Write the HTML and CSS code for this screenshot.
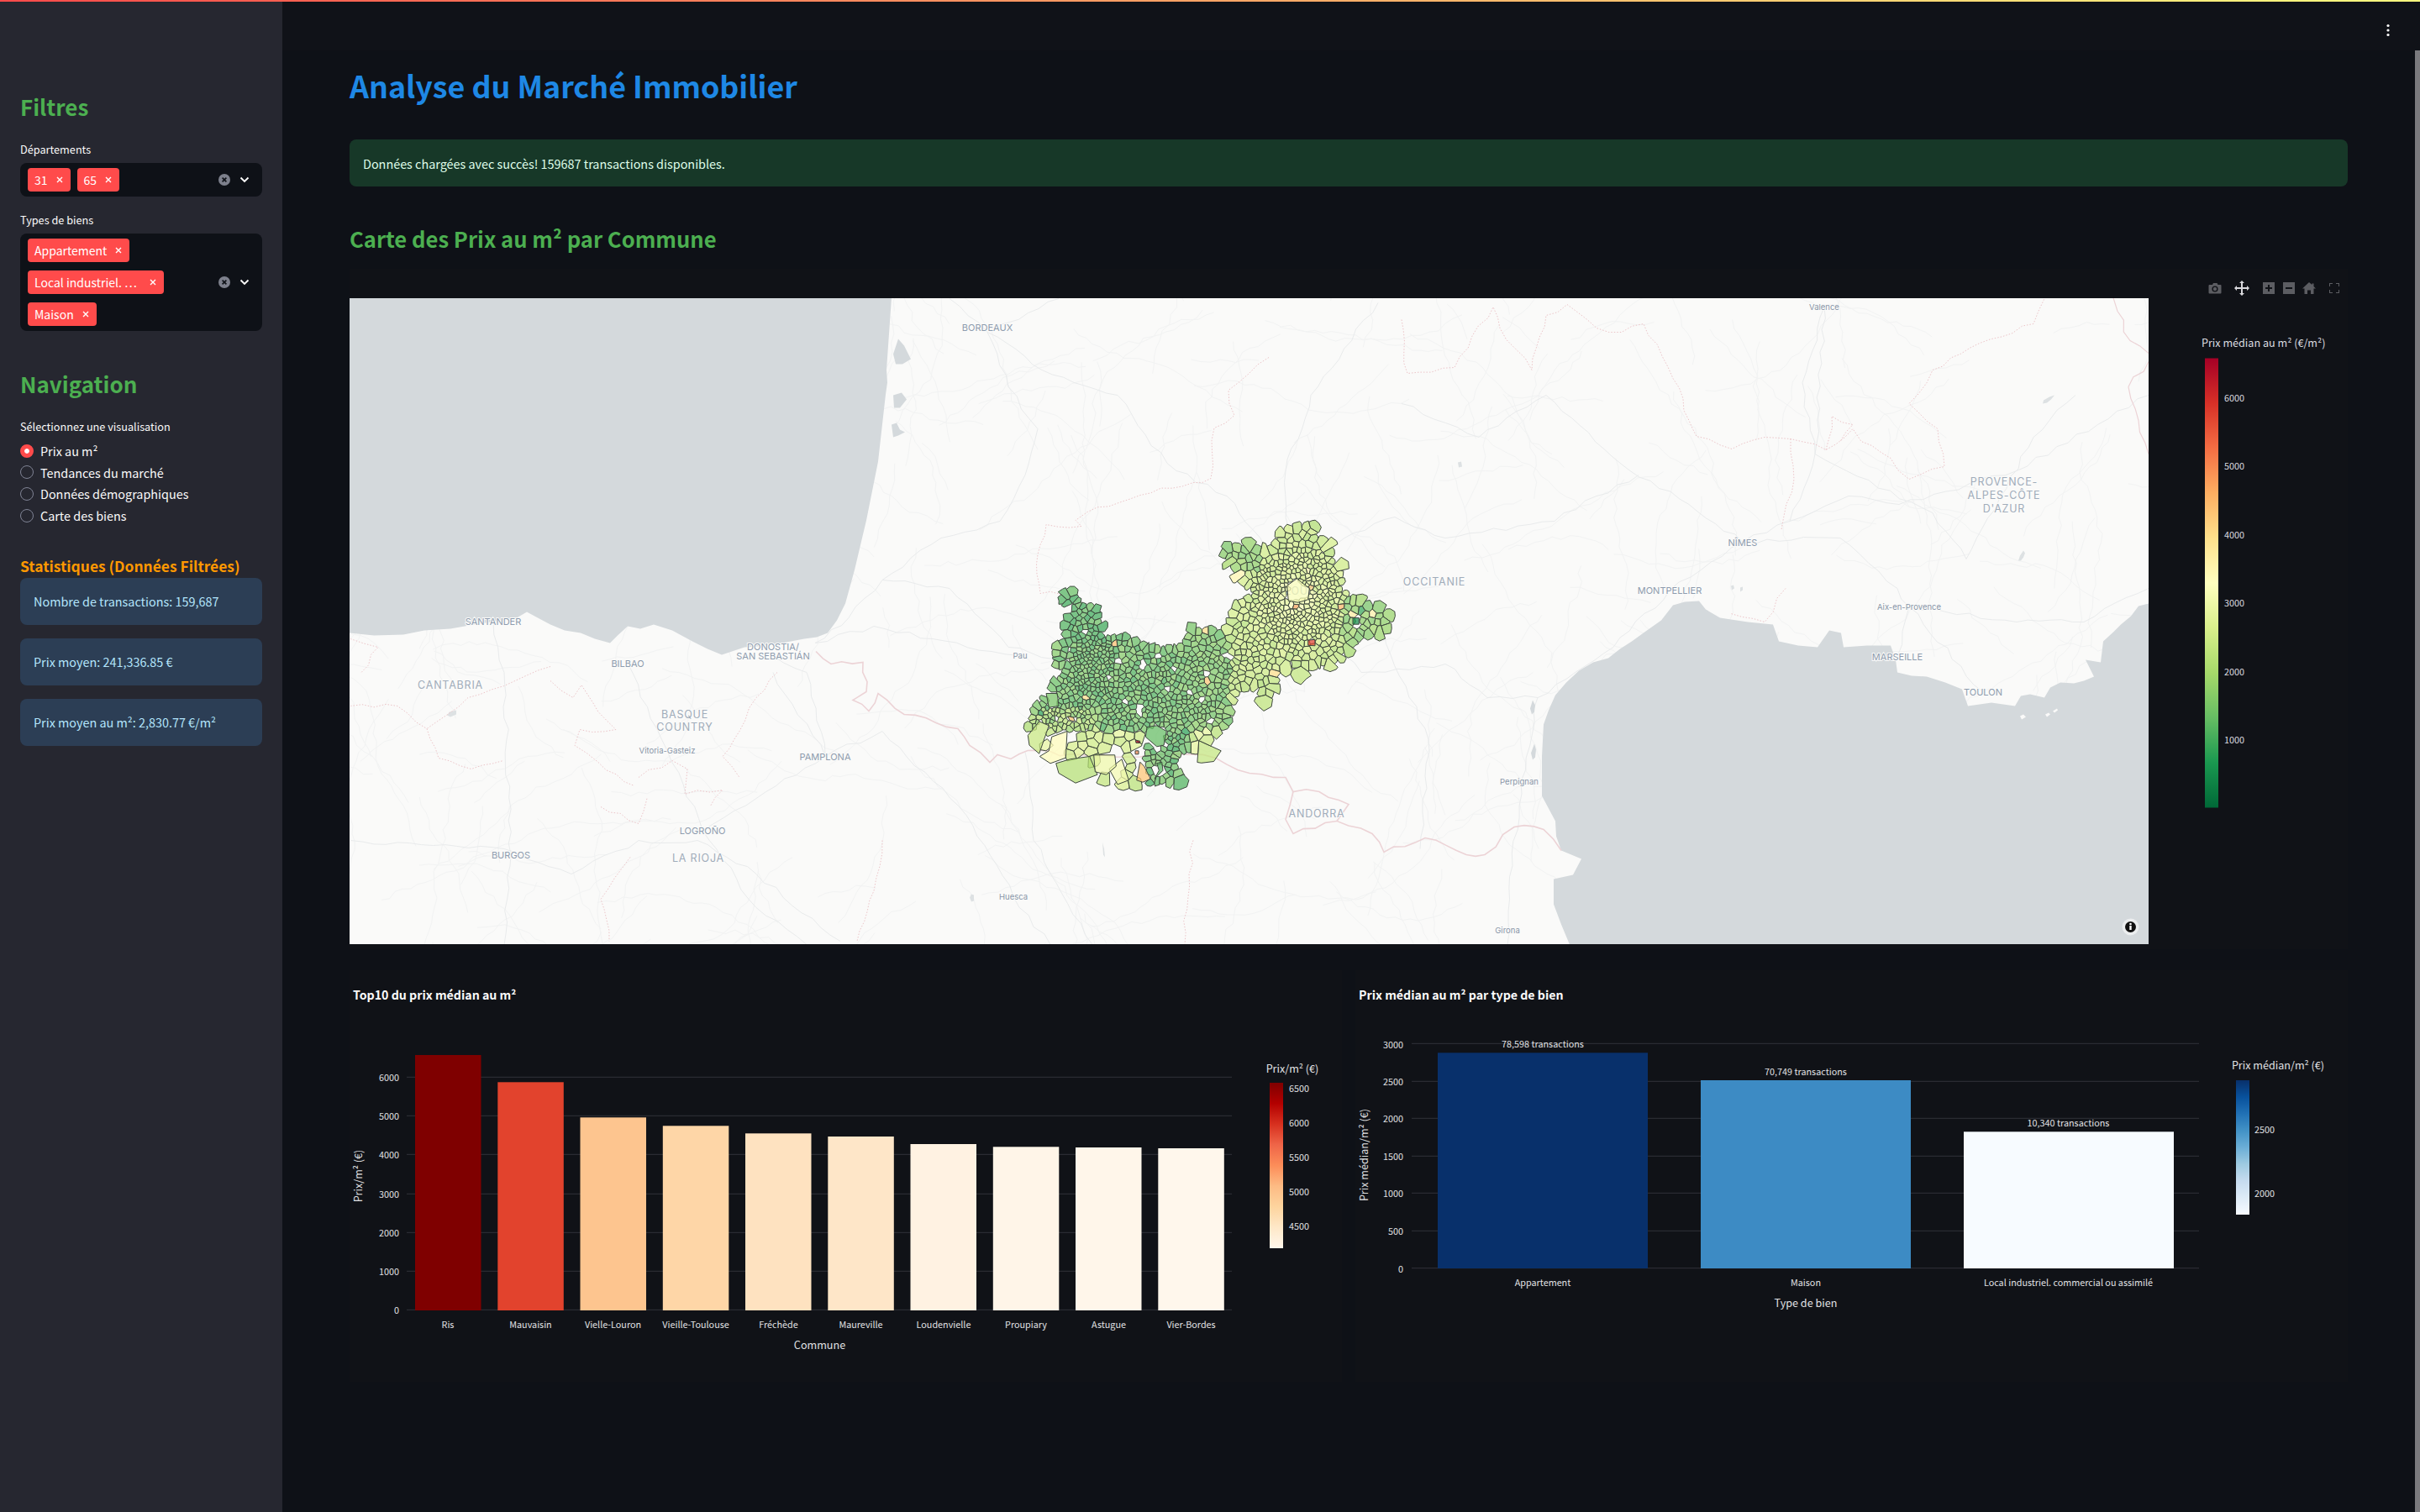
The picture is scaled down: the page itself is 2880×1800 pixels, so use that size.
FILE: index.html
```html
<!DOCTYPE html>
<html lang="fr">
<head>
<meta charset="utf-8">
<title>Analyse du Marché Immobilier</title>
<link rel="stylesheet" href="styles.css">
</head>
<body>
<div class="decor"></div>
<div class="app">
  <aside class="side">
    <h2 class="side-h first">Filtres</h2>
    <div class="lab lab-a">Départements</div>
    <div class="sel">
      <div class="tags">
        <span class="tag">31<svg class="x" viewBox="0 0 10 10"><path d="M2 2l6 6M8 2l-6 6"/></svg></span>
        <span class="tag">65<svg class="x" viewBox="0 0 10 10"><path d="M2 2l6 6M8 2l-6 6"/></svg></span>
      </div>
      <div class="ctl">
        <svg class="clr" viewBox="0 0 14 14"><circle cx="7" cy="7" r="7"/><path d="M4.6 4.6l4.8 4.8M9.4 4.6l-4.8 4.8"/></svg>
        <svg class="chev" viewBox="0 0 14 14"><path d="M2.5 4.5L7 9l4.5-4.5"/></svg>
      </div>
    </div>
    <div class="lab lab-b">Types de biens</div>
    <div class="sel">
      <div class="tags col">
        <span class="tag">Appartement<svg class="x" viewBox="0 0 10 10"><path d="M2 2l6 6M8 2l-6 6"/></svg></span>
        <span class="tag tag-long">Local industriel. …<svg class="x" viewBox="0 0 10 10"><path d="M2 2l6 6M8 2l-6 6"/></svg></span>
        <span class="tag">Maison<svg class="x" viewBox="0 0 10 10"><path d="M2 2l6 6M8 2l-6 6"/></svg></span>
      </div>
      <div class="ctl">
        <svg class="clr" viewBox="0 0 14 14"><circle cx="7" cy="7" r="7"/><path d="M4.6 4.6l4.8 4.8M9.4 4.6l-4.8 4.8"/></svg>
        <svg class="chev" viewBox="0 0 14 14"><path d="M2.5 4.5L7 9l4.5-4.5"/></svg>
      </div>
    </div>
    <h2 class="side-h nav">Navigation</h2>
    <div class="lab lab-a">Sélectionnez une visualisation</div>
    <div class="radios">
      <div class="radio on"><span class="dot"></span>Prix au m²</div>
      <div class="radio"><span class="dot"></span>Tendances du marché</div>
      <div class="radio"><span class="dot"></span>Données démographiques</div>
      <div class="radio"><span class="dot"></span>Carte des biens</div>
    </div>
    <h3 class="stat-h">Statistiques (Données Filtrées)</h3>
    <div class="cards">
      <div class="card">Nombre de transactions: 159,687</div>
      <div class="card">Prix moyen: 241,336.85 €</div>
      <div class="card">Prix moyen au m²: 2,830.77 €/m²</div>
    </div>
  </aside>

  <div class="right">
    <header class="head">
      <svg class="kebab" viewBox="0 0 6 16"><circle cx="3" cy="2.5" r="1.6"/><circle cx="3" cy="8" r="1.6"/><circle cx="3" cy="13.5" r="1.6"/></svg>
    </header>
    <div class="body">
      <main class="main">
        <h1 class="title">Analyse du Marché Immobilier</h1>
        <div class="alert">Données chargées avec succès! 159687 transactions disponibles.</div>
        <h2 class="sub">Carte des Prix au m² par Commune</h2>

        <section class="panel">
          <div class="tools">
            <svg class="ti cam" viewBox="0 0 16 14"><path d="M1.5 3H5l1-2h4.500l1 2h3a1 1 0 0 1 1 1v8.500a1 1 0 0 1-1 1h-13a1 1 0 0 1-1-1V4a1 1 0 0 1 1-1z"/><circle class="hole" cx="8" cy="8" r="3.600"/><circle cx="8" cy="8" r="2.200"/></svg>
            <svg class="ti pan" viewBox="0 0 18 18"><path d="M9 0l3 3h-2v5h5V6l3 3-3 3v-2h-5v5h2l-3 3-3-3h2v-5H3v2L0 9l3-3v2h5V3H6z"/></svg>
            <svg class="ti box" viewBox="0 0 14 14"><rect width="14" height="14"/><path class="sign" d="M6 3h2v3h3v2H8v3H6V8H3V6h3z"/></svg>
            <svg class="ti box" viewBox="0 0 14 14"><rect width="14" height="14"/><path class="sign" d="M3 6h8v2H3z"/></svg>
            <svg class="ti home" viewBox="0 0 16 14"><path d="M8 0l3.500 3V1.500h2V5L16 7.500h-2.500V14H10V9.500H6V14H2.500V7.500H0z"/></svg>
            <svg class="ti full" viewBox="0 0 12 12"><path d="M0 4V0h4M8 0h4v4M12 8v4H8M4 12H0V8"/></svg>
          </div>
          <div class="map-row">
            <svg class="map" viewBox="416 354.500 2141 769.500" aria-label="Carte">
              <rect class="land" x="416" y="354.500" width="2141" height="769.500"/>
              <g id="mesh" class="mesh"></g>
              <g class="road wig">
                <polyline points="1175,395 1200,460 1235,510 1220,565 1190,620 1120,640 1050,690 1010,735 970,765"/>
                <polyline points="1175,395 1240,440 1330,470 1370,530 1400,560 1460,590 1500,640 1537,700"/>
                <polyline points="1050,690 1130,700 1200,770 1280,790 1350,800 1420,790 1480,760 1537,700"/>
                <polyline points="1537,700 1600,640 1660,615 1720,640 1850,620 1900,590 1950,565"/>
                <polyline points="1537,700 1620,800 1720,790 1770,830 1830,830 1920,770 1987,702 2074,645 2130,620 2160,540 2171,365"/>
                <polyline points="2074,645 2190,640 2258,700 2272,722 2258,781"/>
                <polyline points="2272,722 2360,823"/>
                <polyline points="2272,722 2400,740 2480,740 2557,700"/>
                <polyline points="2160,540 2300,610 2340,665 2420,520 2470,470"/>
                <polyline points="1830,830 1810,930 1800,1030 1794,1124"/>
                <polyline points="417,1000 600,1010 680,1040 760,1000 830,1000 900,1040 1000,1120"/>
                <polyline points="608,1017 600,1124"/>
                <polyline points="836,988 900,950 982,900 920,800"/>
                <polyline points="982,900 1050,870 1150,970 1206,1067 1250,1124"/>
                <polyline points="747,789 794,893 836,988 900,1080 960,1124"/>
                <polyline points="587,739 600,800 608,1017"/>
                <polyline points="920,780 960,800 982,900"/>
                <polyline points="970,765 1040,745 1110,760 1180,775 1214,780"/>
                <polyline points="1175,395 1130,355"/>
                <polyline points="1175,395 1260,355"/>
                <polyline points="1668,480 1760,520 1840,470 1940,560 2010,600 2074,645"/>
                <polyline points="2130,620 2200,590 2260,600 2400,560 2557,470"/>
                <polyline points="1537,700 1530,560 1560,470 1640,360"/>
                <polyline points="1640,740 1700,880 1690,1010"/>
                <polyline points="1220,895 1230,1000 1300,1124"/>
                <polyline points="2171,365 2145,455 2160,540"/>
              </g>
              <path class="sea" d="M1061 354L1055 440 1056 455 1054 469 1045 549 1031 619 1026 640 1017 678 1006 718 996 738 985 753 972 758 957 760 915 768 886 770 859 779 842 772 824 763 800 750 778 743 762 748 747 745 735 756 726 765 708 760 691 753 672 750 655 743 640 735 627 728 615 735 599 738 570 742 536 748 505 750 480 755 445 756 416 753 416 354z"/>
              <path class="sea" d="M2557 718L2545 721 2536 733 2524 743 2515 752 2503 763 2500 788 2482 785 2492 805 2480 810 2468 813 2452 812 2440 818 2433 830 2416 826 2405 828 2398 840 2370 836 2342 840 2335 820 2315 812 2293 805 2275 804 2258 800 2256 785 2250 768 2222 768 2194 770 2191 753 2177 750 2163 770 2140 768 2117 763 2110 743 2080 740 2047 735 2030 725 2022 715 2005 716 1991 720 1977 738 1960 750 1942 763 1928 772 1914 783 1896 788 1879 798 1864 812 1851 827 1843 845 1837 862 1835 900 1835 947 1843 962 1851 977 1852 995 1858 1012 1882 1022 1872 1041 1849 1046 1849 1076 1858 1100 1868 1124 2557 1124z"/>
              <g class="sea">
                <path d="M1069 403l7 8 8 16-10 6-8 0-3-12z"/>
                <path d="M1063 470l10-3 6 8-8 10-7 0z"/>
                <path d="M1061 505l6-2 4 8 6 3-8 4-6 2z"/>
                <path d="M1824 833l3 6-1 8-3 3-2-7z"/>
                <path d="M1826 885l2 7-1 9-3 3-2-8z"/>
              </g>
              <g class="lake">
                <path d="M2408 655l2 3-2 5-3 4-3 0 2-6z"/>
                <path d="M2432 476l7-4 6-2-4 5-5 4-5 1z"/>
                <path d="M2060 697l3-1 1 4-3 2zM2071 699l3-1 0 4-3 2z"/>
                <path d="M535 847l8-2 0 5-7 3-4-2z"/>
                <path d="M1156 1064l3 1 0 7-3 1-2-5z"/>
                <path d="M1312 1002l2 8 1 10-2-3z"/>
                <path d="M1735 550l4-1 1 6-4 1z"/>
              </g>
              <path class="land-bit" d="M2404 852l4-2 3 3-5 3zM2434 850l4-2 2 2-4 3zM2443 846l5-3 1 2-4 3z"/>
              <g class="dash wig">
                <polyline points="1510,425 1462,464 1469,494 1445,509 1441,569 1420,574 1357,589 1294,609 1280,619 1287,626 1245,624 1238,648 1234,683 1238,706 1262,707"/>
                <polyline points="1668,380 1675,444 1731,437 1777,365 1785,390 1823,440 1840,375 1865,362 1900,390 1930,395 1956,385 1991,450 2010,500 2019,519 2061,534 2100,520 2131,522 2173,535 2205,510 2215,525 2250,545 2272,570 2314,555 2306,510 2272,480 2300,440 2356,408 2420,385 2433,355"/>
                <polyline points="2173,535 2180,495 2205,505 2190,525"/>
                <polyline points="2125,700 2100,740 2060,730"/>
                <polyline points="2131,522 2135,570 2120,630"/>
                <polyline points="417,840 473,840 508,867 522,902 561,915 599,905"/>
                <polyline points="655,793 613,810 557,830 508,867"/>
                <polyline points="655,810 682,830 692,815 712,847 733,868 690,868 684,887 712,907 755,935"/>
                <polyline points="760,925 800,905 818,915 815,945 860,940 845,960"/>
                <polyline points="750,1020 715,1070 725,1120"/>
                <polyline points="715,960 760,980 770,950"/>
                <polyline points="925,800 900,830 880,870 860,900 880,925"/>
                <polyline points="1050,1000 1040,1060 1020,1120"/>
                <polyline points="1420,1000 1415,1040 1410,1124"/>
                <polyline points="417,760 450,770 430,800"/>
              </g>
              <g class="border wig">
                <polyline points="971,775 989,790 1027,788 1031,823 1015,833 1034,846 1045,825 1076,850 1140,867 1154,887 1178,907 1187,898 1203,903 1223,893 1300,900 1400,897 1447,902 1487,920 1530,925 1539,942 1570,942 1605,957 1591,977 1633,992 1647,1014 1696,997 1745,1017 1767,1017 1802,984 1837,987 1858,1012"/>
                <polyline points="1539,942 1530,975 1539,992 1577,979 1591,977"/>
                <polyline class="thin" points="2557,420 2535,405 2520,370 2515,354"/>
                <polyline class="thin" points="2557,430 2533,460 2545,500 2557,540"/>
              </g>
              <g class="lbl">
                <text class="big" x="1537" y="703">TOULOUSE</text>
                <text x="1175" y="389">BORDEAUX</text>
                <text x="587" y="739">SANTANDER</text>
                <text x="920" y="769">DONOSTIA/</text>
                <text x="920" y="780">SAN SEBASTIÁN</text>
                <text x="747" y="789">BILBAO</text>
                <text class="big" x="536" y="815">CANTABRIA</text>
                <text class="big" x="815" y="850">BASQUE</text>
                <text class="big" x="815" y="865">COUNTRY</text>
                <text class="small" x="794" y="893">Vitoria-Gasteiz</text>
                <text x="982" y="900">PAMPLONA</text>
                <text x="836" y="988">LOGROÑO</text>
                <text class="big" x="831" y="1021">LA RIOJA</text>
                <text x="608" y="1017">BURGOS</text>
                <text class="small" x="1206" y="1067">Huesca</text>
                <text class="small" x="1214" y="780">Pau</text>
                <text class="small" x="2171" y="365">Valence</text>
                <text class="big" x="2385" y="573">PROVENCE-</text>
                <text class="big" x="2385" y="589">ALPES-CÔTE</text>
                <text class="big" x="2385" y="605">D'AZUR</text>
                <text x="2074" y="645">NÎMES</text>
                <text class="big" x="1707" y="692">OCCITANIE</text>
                <text x="1987" y="702">MONTPELLIER</text>
                <text class="small" x="2272" y="722">Aix-en-Provence</text>
                <text x="2258" y="781">MARSEILLE</text>
                <text x="2360" y="823">TOULON</text>
                <text class="small" x="1808" y="930">Perpignan</text>
                <text class="big" x="1567" y="968">ANDORRA</text>
                <text class="small" x="1794" y="1107">Girona</text>
              </g>
              <g id="communes" class="communes"></g>
              <g class="info">
                <circle class="halo" cx="2535.500" cy="1103" r="10"/>
                <circle class="disc" cx="2535.500" cy="1103" r="6.500"/>
                <circle class="i" cx="2535.500" cy="1099.500" r="1.300"/>
                <rect class="i" x="2534.300" y="1101.500" width="2.400" height="5"/>
              </g>
            </svg>
            <svg class="legend" viewBox="2557 354.500 237 769.500">
              <defs>
                <linearGradient id="rdylgn" x1="0" y1="1" x2="0" y2="0">
                  <stop offset="0" stop-color="#006837"/><stop offset=".1" stop-color="#1a9850"/>
                  <stop offset=".2" stop-color="#66bd63"/><stop offset=".3" stop-color="#a6d96a"/>
                  <stop offset=".4" stop-color="#d9ef8b"/><stop offset=".5" stop-color="#ffffbf"/>
                  <stop offset=".6" stop-color="#fee08b"/><stop offset=".7" stop-color="#fdae61"/>
                  <stop offset=".8" stop-color="#f46d43"/><stop offset=".9" stop-color="#d73027"/>
                  <stop offset="1" stop-color="#a50026"/>
                </linearGradient>
              </defs>
              <text class="t13" x="2620" y="407">Prix médian au m² (€/m²)</text>
              <rect x="2624" y="426" width="16" height="535" fill="url(#rdylgn)"/>
              <text class="t12" x="2647" y="472">6000</text>
              <text class="t12" x="2647" y="553">5000</text>
              <text class="t12" x="2647" y="635">4000</text>
              <text class="t12" x="2647" y="716">3000</text>
              <text class="t12" x="2647" y="798">2000</text>
              <text class="t12" x="2647" y="879">1000</text>
            </svg>
          </div>
        </section>

        <div class="charts">
          <svg class="chart" viewBox="416 1155 1181 490">
            <defs>
              <linearGradient id="orrd" x1="0" y1="1" x2="0" y2="0">
                <stop offset="0" stop-color="#fff7ec"/><stop offset=".125" stop-color="#fee8c8"/>
                <stop offset=".25" stop-color="#fdd49e"/><stop offset=".375" stop-color="#fdbb84"/>
                <stop offset=".5" stop-color="#fc8d59"/><stop offset=".625" stop-color="#ef6548"/>
                <stop offset=".75" stop-color="#d7301f"/><stop offset=".875" stop-color="#b30000"/>
                <stop offset="1" stop-color="#7f0000"/>
              </linearGradient>
            </defs>
            <text class="ct" x="420" y="1184">Top10 du prix médian au m²</text>
            <g class="grid">
              <line x1="484" x2="1466" y1="1282.300" y2="1282.300"/><line x1="484" x2="1466" y1="1328.300" y2="1328.300"/>
              <line x1="484" x2="1466" y1="1374.300" y2="1374.300"/><line x1="484" x2="1466" y1="1421.300" y2="1421.300"/>
              <line x1="484" x2="1466" y1="1467.300" y2="1467.300"/><line x1="484" x2="1466" y1="1513.300" y2="1513.300"/>
              <line x1="484" x2="1466" y1="1559.300" y2="1559.300"/>
            </g>
            <rect x="494" y="1256" width="78.500" height="304" fill="#7f0000"/>
            <rect x="592.300" y="1288.300" width="78.500" height="271.700" fill="#e2432d"/>
            <rect x="690.500" y="1330.300" width="78.500" height="229.700" fill="#fdc58f"/>
            <rect x="788.800" y="1340.300" width="78.500" height="219.700" fill="#fed6a7"/>
            <rect x="887" y="1349.300" width="78.500" height="210.700" fill="#fee2c0"/>
            <rect x="985.300" y="1353" width="78.500" height="207" fill="#fee6c8"/>
            <rect x="1083.500" y="1362" width="78.500" height="198" fill="#fff2e2"/>
            <rect x="1181.800" y="1365.300" width="78.500" height="194.700" fill="#fff5e8"/>
            <rect x="1280" y="1366" width="78.500" height="194" fill="#fff6ea"/>
            <rect x="1378.300" y="1367" width="78.500" height="193" fill="#fff7ec"/>
            <g class="ty">
              <text x="475" y="1282">6000</text><text x="475" y="1328">5000</text><text x="475" y="1374">4000</text>
              <text x="475" y="1421">3000</text><text x="475" y="1467">2000</text><text x="475" y="1513">1000</text><text x="475" y="1559">0</text>
            </g>
            <g class="tx">
              <text x="533" y="1576">Ris</text><text x="631.500" y="1576">Mauvaisin</text><text x="729.500" y="1576">Vielle-Louron</text>
              <text x="828" y="1576">Vieille-Toulouse</text><text x="926.500" y="1576">Fréchède</text><text x="1024.500" y="1576">Maureville</text>
              <text x="1123" y="1576">Loudenvielle</text><text x="1221" y="1576">Proupiary</text><text x="1319.500" y="1576">Astugue</text><text x="1417.500" y="1576">Vier-Bordes</text>
            </g>
            <text class="at" x="975.500" y="1600">Commune</text>
            <text class="at" x="425" y="1400" transform="rotate(-90 425 1400)">Prix/m² (€)</text>
            <text class="at" x="1538" y="1271">Prix/m² (€)</text>
            <rect x="1511" y="1289" width="16" height="197" fill="url(#orrd)"/>
            <g class="tl">
              <text x="1534" y="1295">6500</text><text x="1534" y="1336">6000</text><text x="1534" y="1377">5500</text>
              <text x="1534" y="1418">5000</text><text x="1534" y="1459">4500</text>
            </g>
          </svg>

          <svg class="chart" viewBox="1613 1155 1181 490">
            <defs>
              <linearGradient id="blues" x1="0" y1="1" x2="0" y2="0">
                <stop offset="0" stop-color="#f7fbff"/><stop offset=".125" stop-color="#deebf7"/>
                <stop offset=".25" stop-color="#c6dbef"/><stop offset=".375" stop-color="#9ecae1"/>
                <stop offset=".5" stop-color="#6baed6"/><stop offset=".625" stop-color="#4292c6"/>
                <stop offset=".75" stop-color="#2171b5"/><stop offset=".875" stop-color="#08519c"/>
                <stop offset="1" stop-color="#08306b"/>
              </linearGradient>
            </defs>
            <text class="ct" x="1617" y="1184">Prix médian au m² par type de bien</text>
            <g class="grid">
              <line x1="1680" x2="2617" y1="1242.300" y2="1242.300"/><line x1="1680" x2="2617" y1="1287.300" y2="1287.300"/>
              <line x1="1680" x2="2617" y1="1331.300" y2="1331.300"/><line x1="1680" x2="2617" y1="1376.300" y2="1376.300"/>
              <line x1="1680" x2="2617" y1="1420.300" y2="1420.300"/><line x1="1680" x2="2617" y1="1465.300" y2="1465.300"/>
              <line x1="1680" x2="2617" y1="1509.700" y2="1509.700"/>
            </g>
            <rect x="1711" y="1253.300" width="250" height="256.700" fill="#08306b"/>
            <rect x="2024" y="1286" width="250" height="224" fill="#3d8bc4"/>
            <rect x="2337" y="1347.300" width="250" height="162.700" fill="#f7fbff"/>
            <g class="tx">
              <text x="1836" y="1242">78,598 transactions</text><text x="2149" y="1275">70,749 transactions</text><text x="2461.500" y="1336">10,340 transactions</text>
              <text x="1836" y="1526">Appartement</text><text x="2149" y="1526">Maison</text><text x="2461.500" y="1526">Local industriel. commercial ou assimilé</text>
            </g>
            <g class="ty">
              <text x="1670" y="1243">3000</text><text x="1670" y="1287">2500</text><text x="1670" y="1331">2000</text>
              <text x="1670" y="1376">1500</text><text x="1670" y="1420">1000</text><text x="1670" y="1465">500</text><text x="1670" y="1510">0</text>
            </g>
            <text class="at" x="2149" y="1550">Type de bien</text>
            <text class="at" x="1622" y="1375" transform="rotate(-90 1622 1375)">Prix médian/m² (€)</text>
            <text class="at" x="2711" y="1267">Prix médian/m² (€)</text>
            <rect x="2661" y="1286" width="16" height="160" fill="url(#blues)"/>
            <g class="tl">
              <text x="2683" y="1344">2500</text><text x="2683" y="1420">2000</text>
            </g>
          </svg>
        </div>
      </main>
      <div class="scroll"></div>
    </div>
  </div>
</div>
<script src="script.js"></script>
</body>
</html>
```
FILE: styles.css
```css
* { box-sizing: border-box; }
html, body { margin: 0; padding: 0; height: 100%; overflow: hidden; background: #0e1117; }
body { font-family: "Noto Sans CJK SC", "Noto Sans", sans-serif; color: #fafafa; font-size: 14.400px; }
svg text { font-family: "Noto Sans CJK SC", "Noto Sans", sans-serif; }

.decor { height: 2px; background: linear-gradient(90deg, #ff4b4b, #fffd80); }
.app { display: flex; height: 1798px; }

/* Sidebar */
.side { width: 336px; flex: none; background: #262730; padding: 0 24px; }
.side-h { margin: 0; font-weight: 700; font-size: 26px; line-height: 40px; color: #4caf50; }
.side-h.first { margin-top: 105px; }
.side-h.nav { margin-top: 43px; }
.lab { font-size: 12.700px; line-height: 20px; margin-bottom: 6px; color: #fafafa; }
.lab-a { margin-top: 21px; }
.lab-b { margin-top: 18px; }
.sel { display: flex; align-items: center; background: #0e1117; border-radius: 8px; padding: 6px 14px 6px 9px; }
.tags { flex: 1; display: flex; gap: 8px; }
.tags.col { flex-direction: column; align-items: flex-start; gap: 10px; }
.tag { display: inline-flex; align-items: center; gap: 9px; height: 28px; padding: 0 8px; background: #ff4b4b; color: #fff; border-radius: 4px; font-size: 14px; line-height: 28px; white-space: nowrap; }
.tag-long { gap: 14px; }
.x { width: 10px; height: 10px; }
.x path { stroke: #fff; stroke-width: 1.4; fill: none; }
.ctl { display: flex; align-items: center; gap: 10px; }
.clr { width: 14px; height: 14px; }
.clr circle { fill: #7d808c; }
.clr path { stroke: #0e1117; stroke-width: 1.6; fill: none; }
.chev { width: 14px; height: 14px; }
.chev path { stroke: #fafafa; stroke-width: 1.9; fill: none; }
.radios { margin-top: 1px; }
.radio { display: flex; align-items: center; gap: 8px; height: 25.600px; font-size: 14.400px; }
.dot { width: 16px; height: 16px; border-radius: 50%; border: 1px solid #808495; background: #262730; flex: none; }
.radio.on .dot { background: #ff4b4b; border: 5px solid #ff4b4b; box-shadow: inset 0 0 0 3px #fff; }
.stat-h { margin: 33.400px 0 0; font-weight: 700; font-size: 17.400px; line-height: 28px; color: #ff9800; white-space: nowrap; }
.cards { display: flex; flex-direction: column; gap: 16px; }
.card { height: 56px; display: flex; align-items: center; padding-left: 16px; background: #2c3e55; border-radius: 8px; color: #b3e5fc; font-size: 14.400px; }

/* Right */
.right { flex: 1; min-width: 0; display: flex; flex-direction: column; }
.head { height: 58px; flex: none; background: #101218; display: flex; align-items: center; justify-content: flex-end; padding-right: 35px; }
.kebab { width: 6px; height: 16px; margin-top: 10px; }
.kebab circle { fill: #fafafa; }
.body { flex: 1; display: flex; min-height: 0; }
.main { flex: 1; min-width: 0; padding: 0 80px; }
.scroll { width: 6px; flex: none; background: #7a7a7e; }

.title { margin: 11px 0 0; font-size: 35.800px; line-height: 60px; font-weight: 700; color: #1e88e5; }
.alert { margin-top: 35px; height: 56px; display: flex; align-items: center; padding-left: 16px; background: #173828; border-radius: 8px; color: #dffde9; font-size: 14.400px; }
.sub { margin: 40px 0 0; font-size: 25.600px; line-height: 44px; font-weight: 700; color: #4caf50; }

.panel { margin-top: 14px; height: 810px; background: #101217; }
.tools { height: 34.500px; display: flex; align-items: center; justify-content: flex-end; padding-right: 10px; padding-top: 12px; }
.ti { display: block; fill: #5c5d62; }
.cam { width: 16px; height: 14px; margin-right: 15px; }
.cam .hole { fill: #101217; }
.pan { width: 18px; height: 18px; margin-right: 16px; fill: #d8d8dc; }
.box { width: 14px; height: 14px; margin-right: 10px; }
.box + .box { margin-right: 9px; }
.sign { fill: #101217; }
.home { width: 16px; height: 14px; margin-right: 16px; }
.full { width: 12px; height: 12px; fill: none; stroke: #5c5d62; stroke-width: 2; }
.map-row { display: flex; }
.map { display: block; width: 2141px; height: 769.500px; flex: none; }
.legend { display: block; width: 237px; height: 769.500px; flex: none; }

.land { fill: #fafaf9; }
.land-bit { fill: #fafaf9; }
.sea, .sea path { fill: #d4d9dc; }
.lake path { fill: #dde1e3; }
.mesh polyline { fill: none; stroke: #f2f3f3; stroke-width: 1; }
.road polyline { fill: none; stroke: #e9ebec; stroke-width: 1; }
.dash polyline { fill: none; stroke: #ecc4c8; stroke-width: 1; stroke-dasharray: 1.500 2; }
.border polyline { fill: none; stroke: #ecd3d6; stroke-width: 1.600; }
.border .thin { stroke-width: 1.200; }
.lbl text { font-family: "Inter", "Noto Sans", sans-serif; font-size: 11px; fill: #8e9cae; text-anchor: middle; dominant-baseline: central; stroke: #fafaf9; stroke-width: 2px; paint-order: stroke; }
.lbl .big { font-size: 12.500px; letter-spacing: .8px; fill: #a0acba; }
.lbl .small { font-size: 9.500px; fill: #8996a8; }
.communes path { stroke: #3f483f; stroke-width: 1; stroke-linejoin: round; fill-opacity: .72; }
.halo { fill: rgba(255,255,255,.55); }
.disc { fill: #111; }
.info .i { fill: #fff; }

.t13 { font-size: 12.600px; fill: #dcdde0; dominant-baseline: central; }
.t12 { font-size: 10.800px; fill: #dcdde0; dominant-baseline: central; }

.charts { margin-top: 25px; display: grid; grid-template-columns: 1181px 1181px; gap: 16px; }
.chart { display: block; width: 1181px; height: 490px; background: #101217; }
.ct { font-size: 14.200px; font-weight: 700; fill: #fafafa; dominant-baseline: central; }
.grid line { stroke: #31323a; stroke-width: 1; }
.ty text { font-size: 10.800px; fill: #e0e1e4; text-anchor: end; dominant-baseline: central; }
.tx text { font-size: 10.800px; fill: #e0e1e4; text-anchor: middle; dominant-baseline: central; }
.tl text { font-size: 10.800px; fill: #e0e1e4; dominant-baseline: central; }
.at { font-size: 12.600px; fill: #e0e1e4; text-anchor: middle; dominant-baseline: central; }
```
FILE: script.js
```js
// Choropleth of communes (Haute-Garonne & Hautes-Pyrénées) and the basemap's faint road network.
(function () {
  var SVG = "http://www.w3.org/2000/svg";
  var seed = 20240611;
  function rnd() {
    seed |= 0; seed = seed + 0x6D2B79F5 | 0;
    var t = Math.imul(seed ^ seed >>> 15, 1 | seed);
    t = t + Math.imul(t ^ t >>> 7, 61 | t) ^ t;
    return ((t ^ t >>> 14) >>> 0) / 4294967296;
  }
  function sx(x) { return 1180 + x / 3; }
  function sy(y) { return 600 + y / 3; }

  var OUT = [
    [[250,320],[290,305],[305,345],[365,375],[395,430],[370,460],[410,480],[445,478],[470,475],[520,497],[560,520],[600,515],[660,525],[690,490],[720,450],[770,450],[810,465],[850,510],[860,490],[850,455],[865,400],[885,350],[930,335],[945,310],[925,285],[900,275],[880,235],[860,200],[825,170],[890,150],[930,145],[965,170],[1010,160],[1020,125],[1050,95],[1110,85],[1150,70],[1160,120],[1200,160],[1230,210],[1250,260],[1240,300],[1300,330],[1345,370],[1420,385],[1415,445],[1345,460],[1295,470],[1290,505],[1240,530],[1200,580],[1150,565],[1100,600],[1075,550],[1040,535],[1055,585],[1010,600],[1000,660],[975,695],[950,640],[880,660],[840,700],[845,780],[780,815],[770,890],[700,870],[660,880],[672,990],[620,990],[565,990],[520,985],[450,1000],[370,965],[300,995],[240,960],[225,925],[170,900],[135,860],[125,825],[145,770],[160,735],[200,680],[240,630],[265,600],[285,530],[265,450],[285,380],[250,340]],
    [[245,485],[270,500],[255,540],[250,578],[228,570],[235,530]]
  ];
  var BIG = [
    { v: 3350, p: [[215,830],[270,810],[265,905],[210,925],[172,900],[205,880]] },
    { v: 2150, p: [[230,925],[280,910],[350,900],[378,965],[300,995],[240,960]] },
    { v: 4300, p: [[530,920],[545,935],[568,980],[540,992],[518,985]] },
    { v: 3200, p: [[1055,290],[1090,265],[1135,300],[1130,340],[1095,350],[1060,345]] },
    { v: 5700, p: [[1130,485],[1155,482],[1155,505],[1130,503]] },
    { v: 500,  p: [[1290,405],[1312,405],[1312,428],[1290,428]] },
    { v: 1300, p: [[555,795],[590,790],[625,810],[615,860],[590,865],[550,830]] },
    { v: 2400, p: [[130,825],[170,775],[205,790],[170,890],[135,860]] },
    { v: 1500, p: [[195,675],[235,675],[240,720],[205,725]] },
    { v: 3100, p: [[420,945],[465,910],[490,985],[450,1000]] },
    { v: 3000, p: [[365,895],[440,895],[445,935],[410,965],[370,955]] },
    { v: 6500, p: [[514,842],[530,845],[530,852],[516,852]] },
    { v: 5000, p: [[513,880],[525,880],[525,892],[513,892]] },
    { v: 4300, p: [[272,757],[292,760],[298,775],[280,772]] },
    { v: 1200, p: [[590,925],[608,920],[612,950],[582,980],[598,950]] }
  ];
  var HOLES = [[525,735,16],[290,825,18],[590,880,12],[600,960,24],[320,690,10],[460,570,16],[545,575,11],[840,545,10],[940,625,10],[600,545,10],[1290,470,10],[500,920,7],[375,520,5],[760,610,8]];
  var PICK = [[1240,362,4500],[1090,365,4700],[445,487,4400],[340,690,4000],[1005,610,4000],[775,640,4300],[773,458,4000],[1140,295,4200],[1280,395,3700],[1325,370,900],[690,800,800],[175,750,800],[1130,240,3500],[900,255,3500],[1360,395,3600]];

  function inside(p, poly) {
    var c = false;
    for (var i = 0, j = poly.length - 1; i < poly.length; j = i++) {
      var a = poly[i], b = poly[j];
      if ((a[1] > p[1]) !== (b[1] > p[1]) && p[0] < (b[0] - a[0]) * (p[1] - a[1]) / (b[1] - a[1]) + a[0]) c = !c;
    }
    return c;
  }
  function inOut(p) { return inside(p, OUT[0]) || inside(p, OUT[1]); }
  function inBig(p) { for (var i = 0; i < BIG.length; i++) if (inside(p, BIG[i].p)) return true; return false; }
  function radius(x, y) {
    var v = .62 + rnd() * .76;
    if (y > 800 && !(x > 560 && x < 700)) return 38 * v;
    var dt = Math.hypot(x - 1100, y - 330);
    if (dt < 170) return 16 * v;
    if (x > 850) return 24 * v;
    if (x > 290 && x < 430 && y > 470 && y < 680) return 14 * v;
    if (y > 700 && y < 800 && x < 350) return 15 * v;
    return 19 * v;
  }
  function value(x, y) {
    var n = (rnd() - .5);
    if (x > 850) {
      var d = Math.hypot(x - 1090, y - 340);
      var b = 2250 + 1000 * Math.exp(-d / 110);
      if (x > 1250 && y > 340) b = 1700;
      if (x < 960 && y < 240) b = 1750;
      return b + n * 500;
    }
    if (y > 800 && !(x > 560 && x < 700)) return 2500 + n * 800;
    if (y > 800) return 1300 + n * 700;
    if (y > 730 && x < 400) return 2000 + n * 900;
    if (x < 420 && y < 500) return 1150 + n * 500;
    if (x > 700) return 1500 + n * 450;
    return 1350 + n * 600;
  }
  var STOPS = [[0,104,55],[26,152,80],[102,189,99],[166,217,106],[217,239,139],[255,255,191],[254,224,139],[253,174,97],[244,109,67],[215,48,39],[165,0,38]];
  function color(v) {
    var t = Math.max(0, Math.min(.999, v * .000152)) * 10, i = Math.floor(t), f = t - i, a = STOPS[i], b = STOPS[i + 1];
    return "rgb(" + Math.round(a[0] + (b[0] - a[0]) * f) + "," + Math.round(a[1] + (b[1] - a[1]) * f) + "," + Math.round(a[2] + (b[2] - a[2]) * f) + ")";
  }

  // Seeds by dart throwing.
  var seeds = [];
  for (var k = 0; k < 60000; k++) {
    var x = 120 + rnd() * 1310, y = 65 + rnd() * 940, p = [x, y];
    if (!inOut(p)) continue;
    var r = radius(x, y), ok = true;
    for (var s = 0; s < seeds.length; s++) {
      var q = seeds[s];
      if ((q.x - x) * (q.x - x) + (q.y - y) * (q.y - y) < r * r) { ok = false; break; }
    }
    if (ok) seeds.push({ x: x, y: y, r: r });
  }

  function clip(poly, px, py, nx, ny) {
    var out = [];
    for (var i = 0; i < poly.length; i++) {
      var a = poly[i], b = poly[(i + 1) % poly.length];
      var da = (a[0] - px) * nx + (a[1] - py) * ny, db = (b[0] - px) * nx + (b[1] - py) * ny;
      if (da <= 0) out.push(a);
      if ((da < 0 && db > 0) || (da > 0 && db < 0)) {
        var t = da / (da - db);
        out.push([a[0] + (b[0] - a[0]) * t, a[1] + (b[1] - a[1]) * t]);
      }
    }
    return out;
  }

  var g = document.getElementById("communes");
  function add(poly, v) {
    var d = "M" + poly.map(function (c) { return sx(c[0]).toFixed(1) + " " + sy(c[1]).toFixed(1); }).join("L") + "z";
    var el = document.createElementNS(SVG, "path");
    el.setAttribute("d", d);
    el.setAttribute("fill", color(v));
    g.appendChild(el);
  }

  seeds.forEach(function (c) {
    c.v = value(c.x, c.y);
    c.skip = inBig([c.x, c.y]) || (rnd() < .025 && c.x < 850);
    for (var h = 0; h < HOLES.length; h++) {
      var H = HOLES[h];
      if (Math.hypot(c.x - H[0], c.y - H[1]) < H[2]) c.skip = true;
    }
  });
  PICK.forEach(function (pk) {
    var best = null, bd = 1e9;
    seeds.forEach(function (c) {
      var d = Math.hypot(c.x - pk[0], c.y - pk[1]);
      if (d < bd && !c.skip) { bd = d; best = c; }
    });
    if (best) best.v = pk[2];
  });

  seeds.forEach(function (c) {
    if (c.skip) return;
    var poly = [], R = Math.max(c.r, 10) * 1.35, n = 9;
    for (var i = 0; i < n; i++) {
      var ang = i / n * Math.PI * 2 + rnd() * .25, rr = R * (.8 + rnd() * .45);
      poly.push([c.x + Math.cos(ang) * rr, c.y + Math.sin(ang) * rr]);
    }
    seeds.forEach(function (o) {
      if (o === c || !poly.length) return;
      var dx = o.x - c.x, dy = o.y - c.y, dd = dx * dx + dy * dy;
      if (dd > 8000) return;
      poly = clip(poly, (c.x + o.x) / 2, (c.y + o.y) / 2, dx, dy);
    });
    if (poly.length > 2) add(poly, c.v);
  });
  BIG.forEach(function (b) { add(b.p, b.v); });

  // Give the hand-traced roads and boundaries a natural wobble.
  function wobble(pts, amp, step) {
    var out = [];
    for (var i = 0; i < pts.length - 1; i++) {
      var a = pts[i], b = pts[i + 1], dx = b[0] - a[0], dy = b[1] - a[1], L = Math.hypot(dx, dy) || 1;
      var n = Math.max(1, Math.round(L / step));
      for (var j = 0; j < n; j++) {
        var t = j / n, o = j === 0 ? 0 : (rnd() - .5) * amp;
        out.push([(a[0] + dx * t - dy / L * o).toFixed(1), (a[1] + dy * t + dx / L * o).toFixed(1)].join(","));
      }
    }
    var last = pts[pts.length - 1];
    out.push(last[0] + "," + last[1]);
    return out.join(" ");
  }
  Array.prototype.forEach.call(document.querySelectorAll(".wig polyline"), function (pl) {
    var pts = pl.getAttribute("points").trim().split(/\s+/).map(function (s) { return s.split(",").map(Number); });
    pl.setAttribute("points", wobble(pts, 6, 14));
  });

  // Faint secondary roads.
  var mesh = document.getElementById("mesh");
  for (var m = 0; m < 420; m++) {
    var px = 416 + rnd() * 2141, py = 354 + rnd() * 770, a = rnd() * Math.PI * 2, pts = [];
    var segs = 3 + Math.floor(rnd() * 5);
    for (var j = 0; j < segs; j++) {
      pts.push([px, py]);
      a += (rnd() - .5) * .9;
      var len = 20 + rnd() * 40;
      px += Math.cos(a) * len; py += Math.sin(a) * len;
    }
    var pl = document.createElementNS(SVG, "polyline");
    pl.setAttribute("points", wobble(pts.map(function (c) { return [+c[0].toFixed(1), +c[1].toFixed(1)]; }), 6, 10));
    mesh.appendChild(pl);
  }
})();
```
